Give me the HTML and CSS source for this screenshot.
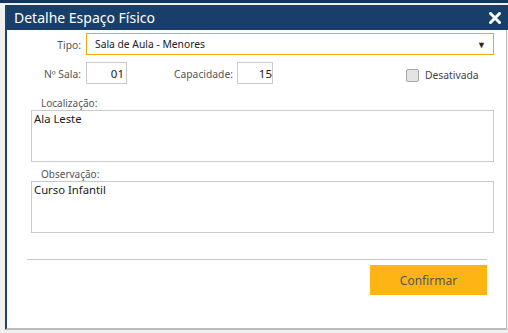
FILE: index.html
```html
<!doctype html>
<html>
<head>
    <meta charset="utf-8">
    <title>Detalhe Espaço Físico</title>
    <link rel="stylesheet" href="styles.css">
</head>

<body>

<div class="topbar"></div>
<div class="dialog">
    <div class="dialog-head">
        <span class="dialog-title">Detalhe Espaço Físico</span>
        <svg class="close" width="12" height="12" viewBox="0 0 12 12">
            <path d="M1.5 1.5 L10.5 10.5 M10.5 1.5 L1.5 10.5" stroke="#fff" stroke-width="3" stroke-linecap="square"/>
        </svg>
    </div>
    <div class="dialog-body">
        <div class="row">
            <label class="lbl">Tipo:</label>
            <div class="select">
                <span>Sala de Aula - Menores</span>
                <span class="arrow">▼</span>
            </div>
        </div>
        <div class="row row-num">
            <label class="lbl">Nº Sala:</label>
            <input class="num num-sala" type="text" value="01">
            <label class="lbl-cap">Capacidade:</label>
            <input class="num num-cap" type="text" value="15">
            <label class="check"><span class="box"></span>Desativada</label>
        </div>
        <div class="field">
            <label class="small">Localização:</label>
            <textarea class="area">Ala Leste</textarea>
        </div>
        <div class="field field-obs">
            <label class="small">Observação:</label>
            <textarea class="area">Curso Infantil</textarea>
        </div>
        <div class="sep"></div>
        <div class="footer">
            <button class="btn-confirm">Confirmar</button>
        </div>
    </div>
</div>

</body>
</html>
```

FILE: styles.css
```css
body {
    margin: 0;
    background: #f0f0f0;
    font-family: "Noto Sans", "Open Sans", sans-serif;
    color: #222;
}

.topbar {
    height: 3px;
    background: #12355a;
}

.dialog {
    margin: 2px 0 0 5px;
    width: 499px;
    height: 323px;
    background: #fff;
    border-left: 2px solid #1d4470;
    border-right: 1px solid #bdbdbd;
    border-bottom: 2px solid #bdbdbd;
    display: flex;
    flex-direction: column;
}

.dialog-head {
    height: 25px;
    background: #173f69;
    display: flex;
    align-items: center;
    padding: 0 7px 0 7px;
    margin-right: -2px;
}

.dialog-title {
    color: #fff;
    font-size: 14px;
    flex: 1;
}

.close {
    display: block;
}

.dialog-body {
    padding: 3px 12px 0 0;
    font-size: 10.3px;
}

.row {
    display: flex;
    align-items: center;
    height: 22px;
}

.row-num {
    margin-top: 7px;
}

.lbl {
    width: 74px;
    text-align: right;
    margin-right: 5px;
    color: #555;
    position: relative;
    top: 1px;
}

.select {
    flex: 1;
    height: 22px;
    box-sizing: border-box;
    border: 1px solid #f2a714;
    display: flex;
    align-items: center;
    justify-content: space-between;
    padding: 0 7px 0 8px;
    color: #222;
}

.arrow {
    font-size: 9px;
}

.num {
    height: 22px;
    box-sizing: border-box;
    border: 1px solid #cacaca;
    font: inherit;
    font-size: 11.5px;
    color: #222;
    text-align: right;
    margin: 0;
}

.num-sala {
    width: 41px;
    padding: 0 2px 0 0;
}

.lbl-cap {
    width: 106px;
    text-align: right;
    margin-right: 4px;
    color: #555;
    position: relative;
    top: 1px;
}

.num-cap {
    width: 36px;
    padding: 0;
}

.check {
    margin-left: 133px;
    display: flex;
    align-items: center;
    color: #444;
    position: relative;
    top: 2px;
}

.box {
    width: 11px;
    height: 11px;
    border: 1px solid #a8a8a8;
    border-radius: 2px;
    background: #e4e4e4;
    margin-right: 6px;
}

.field {
    margin-top: 12px;
    padding-left: 24px;
}

.field-obs {
    margin-top: 5px;
}

.small {
    display: block;
    height: 14px;
    line-height: 14px;
    padding-left: 10px;
    color: #555;
    font-size: 10px;
}

.area {
    display: block;
    width: 463px;
    height: 52px;
    box-sizing: border-box;
    border: 1px solid #cacaca;
    margin: 0;
    padding: 0 2px;
    line-height: 14px;
    resize: none;
    font: inherit;
    font-size: 11.3px;
    color: #222;
}

.sep {
    margin: 26px 7px 0 20px;
    height: 1px;
    background: #c8c8c8;
}

.footer {
    display: flex;
    justify-content: flex-end;
    margin-top: 5px;
    padding-right: 7px;
}

.btn-confirm {
    width: 117px;
    height: 30px;
    border: none;
    background: #fdb414;
    color: #555;
    font: inherit;
    font-size: 12px;
}
```
